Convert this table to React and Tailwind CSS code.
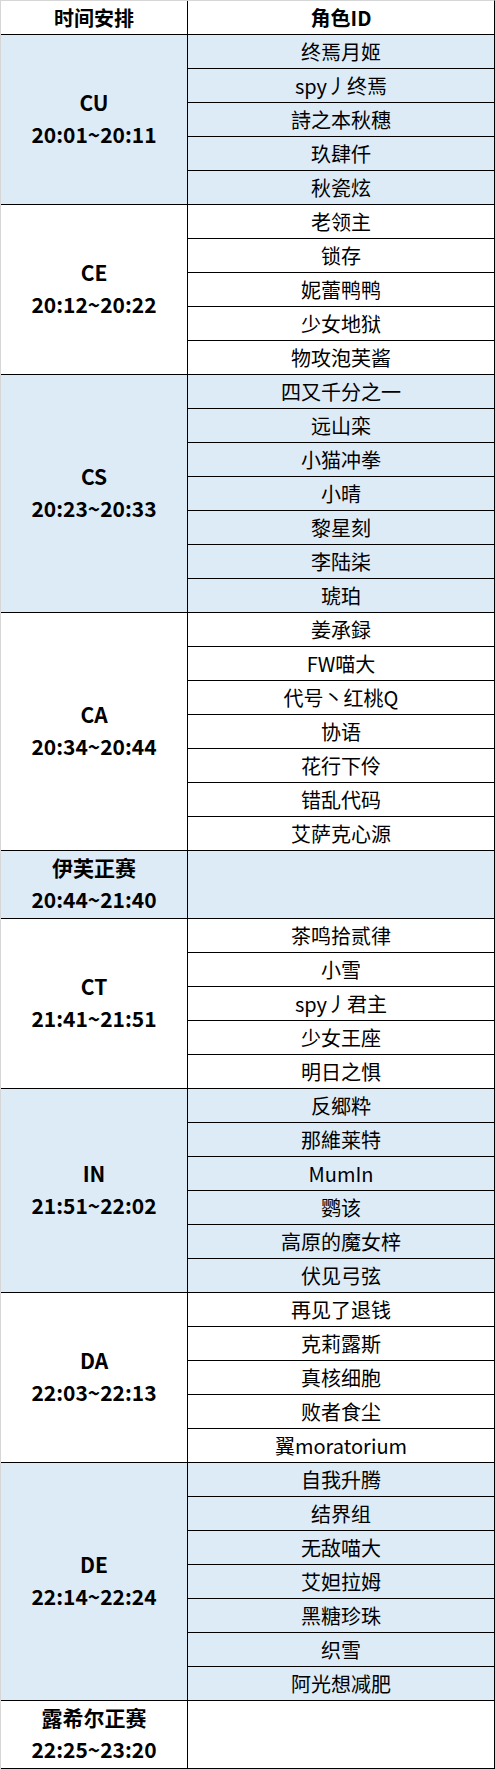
const groups = [
  { code: "CU", time: "20:01~20:11", blue: true, names: ["终焉月姬", "spy丿终焉", "詩之本秋穗", "玖肆仟", "秋瓷炫"] },
  { code: "CE", time: "20:12~20:22", blue: false, names: ["老领主", "锁存", "妮蕾鸭鸭", "少女地狱", "物攻泡芙酱"] },
  { code: "CS", time: "20:23~20:33", blue: true, names: ["四又千分之一", "远山栾", "小猫冲拳", "小晴", "黎星刻", "李陆柒", "琥珀"] },
  { code: "CA", time: "20:34~20:44", blue: false, names: ["姜承録", "FW喵大", "代号丶红桃Q", "协语", "花行下伶", "错乱代码", "艾萨克心源"] },
  { code: "伊芙正赛", time: "20:44~21:40", blue: true, names: [] },
  { code: "CT", time: "21:41~21:51", blue: false, names: ["茶鸣拾贰律", "小雪", "spy丿君主", "少女王座", "明日之惧"] },
  { code: "IN", time: "21:51~22:02", blue: true, names: ["反郷粋", "那維莱特", "MumIn", "鹦该", "高原的魔女梓", "伏见弓弦"] },
  { code: "DA", time: "22:03~22:13", blue: false, names: ["再见了退钱", "克莉露斯", "真核细胞", "败者食尘", "翼moratorium"] },
  { code: "DE", time: "22:14~22:24", blue: true, names: ["自我升腾", "结界组", "无敌喵大", "艾妲拉姆", "黑糖珍珠", "织雪", "阿光想减肥"] },
  { code: "露希尔正赛", time: "22:25~23:20", blue: false, names: [] },
];

export default function App() {
  return (
    <div className="w-[495px] bg-white text-black font-['Noto_Sans_CJK_SC',sans-serif] text-[20px]">
      <div className="border-l border-t border-r border-l-[#d6d6d6] border-t-[#d6d6d6] border-r-black">
        {/* header */}
        <div className="flex h-[34px] border-b border-black font-bold">
          <div className="w-[187px] shrink-0 border-r border-black flex items-center justify-center">
            时间安排
          </div>
          <div className="flex-1 flex items-center justify-center">角色ID</div>
        </div>

        {groups.map((g) => (
          <div key={g.code} className={`flex ${g.blue ? "bg-[#ddebf7]" : "bg-white"}`}>
            <div className="w-[187px] shrink-0 border-r border-b border-black flex flex-col items-center justify-center pb-[3px] font-bold text-[21px] leading-[32px]">
              <span>{g.code}</span>
              <span>{g.time}</span>
            </div>
            <div className="flex-1 flex flex-col">
              {g.names.length === 0 ? (
                <div className="h-[68px] border-b border-black" />
              ) : (
                g.names.map((n) => (
                  <div key={n} className="h-[34px] flex items-center justify-center border-b border-black">
                    {n}
                  </div>
                ))
              )}
            </div>
          </div>
        ))}
      </div>
    </div>
  );
}
